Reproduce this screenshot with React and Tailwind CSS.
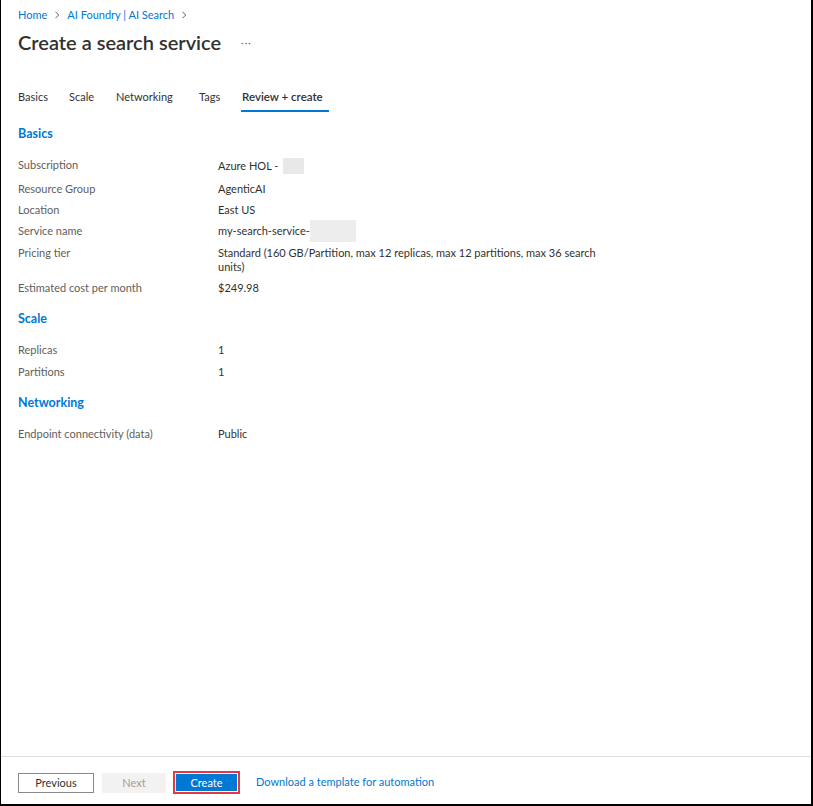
import React from "react";

const font = { fontFamily: 'Lato, "Noto Sans", sans-serif' };

function Row({ label, children }) {
  return (
    <div className="flex">
      <div className="w-[200px] shrink-0 text-[#605e5c]">{label}</div>
      <div className="w-[385px] text-[#323130]">{children}</div>
    </div>
  );
}

function Section({ title, children }) {
  return (
    <div className="flex flex-col">
      <div className="text-[12.5px] font-bold text-[#0078d4] leading-[18px] mb-[15px]">{title}</div>
      <div className="flex flex-col gap-[7.4px] text-[11px] leading-[14px]">{children}</div>
    </div>
  );
}

export default function App() {
  return (
    <div
      className="w-[813px] h-[806px] bg-white border-l border-r-2 border-b-2 border-black flex flex-col overflow-hidden"
      style={font}
    >
      <div className="flex-1 px-[17px]">
        <div className="flex items-center gap-[6px] pt-[7px] text-[11px] leading-[16px] text-[#0078d4]">
          <span>Home</span>
          <svg width="8" height="8" viewBox="0 0 8 8" className="text-[#605e5c]">
            <path d="M2.5 0.8 L5.7 4 L2.5 7.2" fill="none" stroke="currentColor" strokeWidth="1" />
          </svg>
          <span>AI Foundry | AI Search</span>
          <svg width="8" height="8" viewBox="0 0 8 8" className="text-[#605e5c]">
            <path d="M2.5 0.8 L5.7 4 L2.5 7.2" fill="none" stroke="currentColor" strokeWidth="1" />
          </svg>
        </div>
        <div className="flex items-center mt-[5px] h-[28px]">
          <h1 className="text-[20px] font-semibold text-[#323130] leading-[28px]">Create a search service</h1>
          <span className="ml-[20px] text-[10px] text-[#605e5c] tracking-[1px]">···</span>
        </div>
        <div className="flex items-end mt-[32px] text-[11px] text-[#323130]">
          <div className="pb-[7px] w-[51px]">Basics</div>
          <div className="pb-[7px] w-[47px]">Scale</div>
          <div className="pb-[7px] w-[83px]">Networking</div>
          <div className="pb-[7px] w-[42px]">Tags</div>
          <div className="flex flex-col">
            <div className="font-semibold pb-[5px] pl-[1px] text-[11.5px]">Review + create</div>
            <div className="h-[2px] w-[88px] bg-[#0078d4]" />
          </div>
        </div>
        <div className="flex flex-col gap-[15px] mt-[13px]">
          <Section title="Basics">
            <Row label="Subscription">
              <span className="inline-flex items-center">
                Azure HOL -<span className="ml-[5px] inline-block w-[21px] h-[16px] bg-[#e8e8e8]" />
              </span>
            </Row>
            <Row label="Resource Group">AgenticAI</Row>
            <Row label="Location">East US</Row>
            <Row label="Service name">
              <span className="inline-flex items-center">
                my-search-service-<span className="inline-block w-[46px] h-[22px] bg-[#ededed] -my-[4px]" />
              </span>
            </Row>
            <Row label="Pricing tier">
              Standard (160 GB/Partition, max 12 replicas, max 12 partitions, max 36 search units)
            </Row>
            <Row label="Estimated cost per month">$249.98</Row>
          </Section>
          <Section title="Scale">
            <Row label="Replicas">1</Row>
            <Row label="Partitions">1</Row>
          </Section>
          <Section title="Networking">
            <Row label="Endpoint connectivity (data)">Public</Row>
          </Section>
        </div>
      </div>
      <div className="border-t border-[#e1dfdd] h-[48px] flex items-center pt-[4px] px-[17px] text-[11px]">
        <button className="w-[76px] h-[20px] border border-[#8a8886] text-[#323130] leading-none">Previous</button>
        <button className="ml-[8px] w-[64px] h-[20px] bg-[#f3f2f1] text-[#a19f9d] leading-none">Next</button>
        <div className="ml-[7px] border-2 border-[#e8383d] p-[1px]">
          <button className="w-[61px] h-[17px] bg-[#0078d4] text-white leading-none">Create</button>
        </div>
        <a className="ml-[16px] text-[#0078d4]">Download a template for automation</a>
      </div>
    </div>
  );
}
